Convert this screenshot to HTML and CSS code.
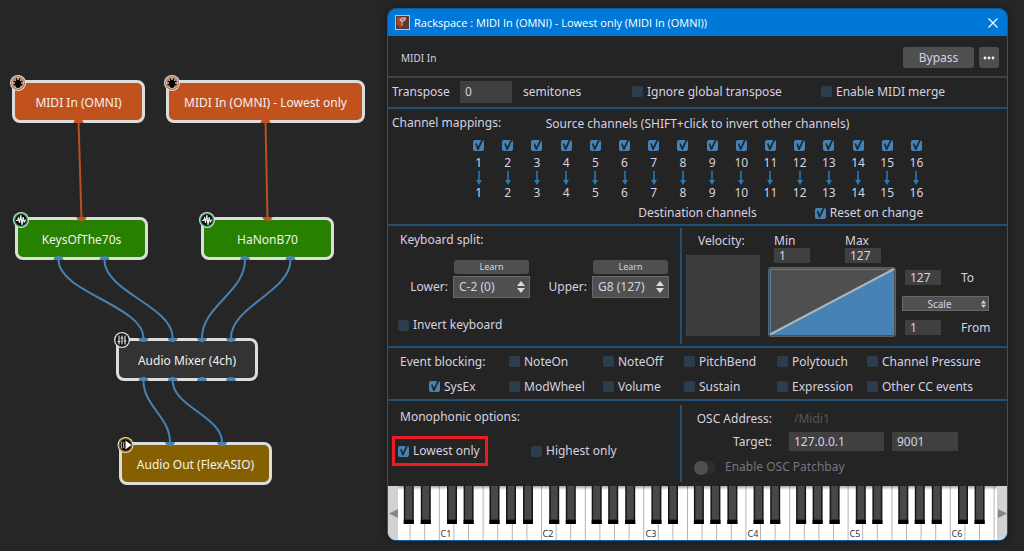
FILE: index.html
```html
<!DOCTYPE html>
<html lang="en">
<head>
<meta charset="utf-8">
<title>Rackspace</title>
<link rel="stylesheet" href="styles.css">
</head>
<body>
<section class="canvas" aria-label="Wiring view">
  <div class="node midi n1">MIDI In (OMNI)</div>
  <div class="node midi n2">MIDI In (OMNI) - Lowest only</div>
  <div class="node synth n3">KeysOfThe70s</div>
  <div class="node synth n4">HaNonB70</div>
  <div class="node mixer n5">Audio Mixer (4ch)</div>
  <div class="node output n6">Audio Out (FlexASIO)</div>
  <svg class="wires" width="387" height="551" viewBox="0 0 387 551" aria-hidden="true">
    <defs>
      <path id="out" d="M-5 0A5 4 0 0 1 5 0Z"/>
      <path id="in" d="M-5 0A5 4 0 0 0 5 0Z"/>
      <g id="midi-badge"><circle r="8" fill="#dcdcdc"/><circle r="7" fill="#c96a3e"/><circle r="5.800" fill="#e6d6cc"/><circle r="5" fill="#050505"/><g fill="#e6d6cc"><circle cx="-4" cy="0" r=".9"/><circle cx="4" cy="0" r=".9"/><circle cx="-2.800" cy="-2.900" r=".9"/><circle cx="2.800" cy="-2.900" r=".9"/><circle cx="0" cy="-4" r=".9"/><path d="M-4 2.500l1.500 0v2.500zM4 2.500l-1.500 0v2.500z"/></g></g>
      <g id="synth-badge"><circle r="8" fill="#dcdcdc"/><circle r="7" fill="#2f9a58"/><circle r="5.700" fill="#050505"/><path d="M-5 .5H-3.500L-2.500-2L-1.500 3L-.200-5L1 5L2.200-3L3.200 2L5-.5" stroke="#eee" stroke-width="1.200" fill="none"/></g>
    </defs>
    <g fill="none" stroke="#b9511f" stroke-width="2"><path d="M78.500 121L81.500 219M265.500 121L267.500 219"/></g>
    <g fill="none" stroke="#4682b4" stroke-width="2">
      <path d="M58.500 260C58.500 292 143.500 306 143.500 338"/>
      <path d="M104.500 260C104.500 292 172.700 306 172.700 338"/>
      <path d="M245 260C245 292 202 306 202 338"/>
      <path d="M290.500 260C290.500 292 231 306 231 338"/>
      <path d="M143.500 381C143.500 406 170 417 170 442"/>
      <path d="M172.700 381C172.700 406 222 417 222 442"/>
    </g>
    <g fill="#c4541f"><use href="#out" x="78.500" y="123"/><use href="#out" x="265.500" y="123"/><use href="#in" x="81.500" y="217"/><use href="#in" x="267.500" y="217"/></g>
    <g fill="#4682b4">
      <use href="#out" x="58.500" y="260"/><use href="#out" x="104.500" y="260"/><use href="#out" x="245" y="260"/><use href="#out" x="290.500" y="260"/>
      <use href="#in" x="143.500" y="338"/><use href="#in" x="172.700" y="338"/><use href="#in" x="202" y="338"/><use href="#in" x="231" y="338"/>
      <use href="#out" x="143.500" y="381"/><use href="#out" x="172.700" y="381"/><use href="#out" x="202" y="381"/><use href="#out" x="231" y="381"/>
      <use href="#in" x="170" y="442"/><use href="#in" x="222" y="442"/>
    </g>
    <use href="#midi-badge" x="18" y="83"/><use href="#midi-badge" x="172" y="83"/>
    <use href="#synth-badge" x="21" y="220"/><use href="#synth-badge" x="207" y="220"/>
    <g transform="translate(122 340)"><circle r="8" fill="#dcdcdc"/><circle r="6.700" fill="#111"/><path d="M-3-4.500v9M0-4.500v9M3-4.500v9M-4.500 1.500h3M-1.500-2h3M1.500 1h3" stroke="#ddd" stroke-width="1.200"/></g>
    <g transform="translate(125.500 445)"><circle r="8" fill="#dcdcdc"/><circle r="7" fill="#8a6200"/><circle r="5.700" fill="#050505"/><path d="M0-4.500L6 0L0 4.500z" fill="#fff"/><path d="M-3.500-3.500q-2 3.500 0 7M-1.500-3q-1 3 0 6" stroke="#ccc" fill="none"/></g>
  </svg>
</section>

<main class="window">
  <header class="titlebar">
    <svg class="app-icon" width="15" height="15" viewBox="0 0 15 15" aria-hidden="true"><path fill="#c9c4c0" d="M0 0h15v15H0z"/><path fill="#5b3a33" d="M1 1h13v13H1z"/><path fill="#b5402c" d="M2 2h9L6 7v6L2 9z"/><path d="M10.500 3Q5 2.500 5 5.500q3 2 4.500 0T10.500 3M7 7v4" fill="#d9694f" stroke="#ead9d2" stroke-width=".9"/></svg>
    <h1>Rackspace : MIDI In (OMNI) - Lowest only (MIDI In (OMNI))</h1>
    <button class="close" aria-label="Close"><svg width="10" height="10" viewBox="0 0 10 10"><path d="M.5.5l9 9M9.500.5l-9 9" stroke="#fff" stroke-width="1.100"/></svg></button>
  </header>

  <div class="plugin-bar">
    <span class="plugin-name">MIDI In</span>
    <button class="btn bypass">Bypass</button>
    <button class="btn more" aria-label="More"><svg width="12" height="4" viewBox="0 0 12 4"><g fill="#f2f2f6"><circle cx="2" cy="2" r="1.400"/><circle cx="6" cy="2" r="1.400"/><circle cx="10" cy="2" r="1.400"/></g></svg></button>
  </div>

  <div class="transpose">
    <label for="transpose">Transpose</label>
    <input class="field" id="transpose" value="0">
    <span>semitones</span>
    <label class="check"><input type="checkbox">Ignore global transpose</label>
    <label class="check"><input type="checkbox">Enable MIDI merge</label>
  </div>

  <section class="channels">
    <div class="triple head"><h2>Channel mappings:</h2><span class="source">Source channels (SHIFT+click to invert other channels)</span></div>
    <div class="channel-grid" id="channel-grid"></div>
    <div class="triple foot"><span class="dest">Destination channels</span><label class="check reset"><input type="checkbox" checked>Reset on change</label></div>
  </section>

  <section class="pair split-row">
    <div class="split">
      <h2>Keyboard split:</h2>
      <div class="ranges">
        <label for="lower">Lower:</label>
        <div class="range"><button class="btn learn">Learn</button><div class="select"><select id="lower"><option>C-2 (0)</option></select><svg width="8" height="12" viewBox="0 0 8 12"><path d="M0 5l4-5 4 5zM0 7l4 5 4-5z" fill="#dcd8ea"/></svg></div></div>
        <label for="upper">Upper:</label>
        <div class="range"><button class="btn learn">Learn</button><div class="select"><select id="upper"><option>G8 (127)</option></select><svg width="8" height="12" viewBox="0 0 8 12"><path d="M0 5l4-5 4 5zM0 7l4 5 4-5z" fill="#dcd8ea"/></svg></div></div>
      </div>
      <label class="check"><input type="checkbox">Invert keyboard</label>
    </div>
    <div class="velocity">
      <div class="vel-meter"><h2>Velocity:</h2><div class="meter"></div></div>
      <div class="vel-curve">
        <div class="limits">
          <div class="limit"><label for="vmin">Min</label><input class="field small" id="vmin" value="1"></div>
          <div class="limit"><label for="vmax">Max</label><input class="field small" id="vmax" value="127"></div>
        </div>
        <svg class="curve" viewBox="0 0 128 70" aria-hidden="true"><rect x=".5" y=".5" width="127" height="69" rx="2" fill="#4f4f4f" stroke="#62605e"/><path d="M2.500 67V2.500H125" fill="none" stroke="#4682b4"/><path d="M2 68L126 2V68Z" fill="#4682b4"/><path d="M2 67.500L126 2" stroke="#a9b4bd" stroke-width="2"/></svg>
      </div>
      <div class="vel-out">
        <div class="out-row"><input class="field small" id="vto" value="127"><label for="vto">To</label></div>
        <div class="select scale"><select aria-label="Curve mode"><option>Scale</option></select><svg width="5" height="8" viewBox="0 0 8 12"><path d="M0 5l4-5 4 5zM0 7l4 5 4-5z" fill="#dcd8ea"/></svg></div>
        <div class="out-row"><input class="field small" id="vfrom" value="1"><label for="vfrom">From</label></div>
      </div>
    </div>
  </section>

  <section class="events">
    <h2>Event blocking:</h2>
    <label class="check"><input type="checkbox">NoteOn</label>
    <label class="check"><input type="checkbox">NoteOff</label>
    <label class="check"><input type="checkbox">PitchBend</label>
    <label class="check"><input type="checkbox">Polytouch</label>
    <label class="check"><input type="checkbox">Channel Pressure</label>
    <label class="check sysex"><input type="checkbox" checked>SysEx</label>
    <label class="check"><input type="checkbox">ModWheel</label>
    <label class="check"><input type="checkbox">Volume</label>
    <label class="check"><input type="checkbox">Sustain</label>
    <label class="check"><input type="checkbox">Expression</label>
    <label class="check"><input type="checkbox">Other CC events</label>
  </section>

  <section class="pair mono-row">
    <div class="mono">
      <h2>Monophonic options:</h2>
      <div class="mono-checks">
        <label class="check marked"><input type="checkbox" checked>Lowest only</label>
        <label class="check"><input type="checkbox">Highest only</label>
      </div>
    </div>
    <div class="osc">
      <div class="osc-grid">
        <label for="osc">OSC Address:</label><input class="ghost" id="osc" placeholder="/Midi1">
        <label for="target">Target:</label>
        <div class="target"><input class="field host" id="target" value="127.0.0.1"><input class="field port" aria-label="Port" value="9001"></div>
      </div>
      <label class="toggle"><input type="checkbox" disabled>Enable OSC Patchbay</label>
    </div>
  </section>

  <div class="keyboard">
    <button class="scroll" aria-label="Scroll left"><svg width="9" height="9" viewBox="0 0 9 9"><path d="M9 0v9L0 4.500z" fill="#878787"/></svg></button>
    <svg class="keys" viewBox="0 0 599 54" role="img" aria-label="Piano keyboard">
      <defs>
        <linearGradient id="shade" x2="0" y2="1"><stop stop-color="#000" stop-opacity=".35"/><stop offset="1" stop-color="#000" stop-opacity="0"/></linearGradient>
        <g id="whites"><path d="M0 0V54M14.600 0V54M29.200 0V54M43.800 0V54M58.400 0V54M73 0V54M87.600 0V54" stroke="#b5b5b5"/></g>
        <g id="black"><path fill="#161616" d="M0 0h10v38H0z"/><path fill="#484848" d="M1.500 0h7v33.500h-7z"/><path fill="#000" d="M0 34h10v4H0z"/></g>
        <g id="blacks"><use href="#black" x="7.700"/><use href="#black" x="24.300"/><use href="#black" x="50.200"/><use href="#black" x="66.700"/><use href="#black" x="83.700"/></g>
      </defs>
      <path fill="#fff" d="M0 0h599v54H0z"/>
      <use href="#whites" x="-60.900"/><use href="#whites" x="41.300"/><use href="#whites" x="143.500"/><use href="#whites" x="245.700"/><use href="#whites" x="347.900"/><use href="#whites" x="450.100"/><use href="#whites" x="552.300"/>
      <path fill="url(#shade)" d="M0 0h599v4H0z"/>
      <use href="#blacks" x="-60.900"/><use href="#blacks" x="41.300"/><use href="#blacks" x="143.500"/><use href="#blacks" x="245.700"/><use href="#blacks" x="347.900"/><use href="#blacks" x="450.100"/><use href="#blacks" x="552.300"/>
      <g class="key-names"><text x="48" y="51">C1</text><text x="150" y="51">C2</text><text x="253" y="51">C3</text><text x="355" y="51">C4</text><text x="457" y="51">C5</text><text x="559" y="51">C6</text></g>
    </svg>
    <button class="scroll" aria-label="Scroll right"><svg width="9" height="9" viewBox="0 0 9 9"><path d="M0 0v9l9-4.500z" fill="#878787"/></svg></button>
  </div>
</main>
<script src="channels.js"></script>
</body>
</html>
```
FILE: styles.css
```css
* { box-sizing: border-box; }

body {
  margin: 0;
  padding-top: 8px;
  min-height: 100vh;
  background: #262626;
  color: #d6d2e0;
  font: 12px/14px "Noto Sans", Verdana, sans-serif;
}

button, input, select { font: inherit; color: inherit; margin: 0; padding: 0; border: 0; border-radius: 0; }
h1, h2 { margin: 0; font-size: inherit; font-weight: normal; white-space: nowrap; }
label, span { white-space: nowrap; }
svg { display: block; }

/* wiring canvas */
.canvas { position: absolute; top: 0; left: 0; }
.wires { position: absolute; top: 0; left: 0; }
.node {
  position: absolute;
  height: 43px;
  display: flex;
  align-items: center;
  justify-content: center;
  padding-top: 2px;
  border: 3px solid #dcdcdc;
  border-radius: 8px;
  color: #f2f0f0;
  white-space: nowrap;
}
.midi { background: #c1521e; }
.synth { background: #278000; }
.mixer { background: #333; }
.output { background: #866000; }
.n1 { left: 12px; top: 80px; width: 133px; }
.n2 { left: 166px; top: 80px; width: 199px; }
.n3 { left: 15px; top: 217px; width: 133px; }
.n4 { left: 201px; top: 217px; width: 133px; }
.n5 { left: 116px; top: 338px; width: 142px; }
.n6 { left: 119px; top: 442px; width: 153px; }

/* plugin window */
.window {
  margin: 0 16px 0 387px;
  border: 1px solid #0f5c9a;
  border-radius: 9px;
  overflow: hidden;
  background: #242424;
  box-shadow: 0 0 10px rgba(0, 0, 0, .4);
}
.titlebar {
  display: flex;
  align-items: center;
  gap: 4px;
  height: 27px;
  padding: 0 8px 0 7px;
  background: #0078d7;
  color: #fff;
}
.titlebar h1 { flex: 1; font: 11px/16px "Open Sans", "Segoe UI", sans-serif; }
.close { display: grid; place-items: center; width: 12px; height: 20px; background: none; }

.plugin-bar {
  display: flex;
  align-items: center;
  gap: 5px;
  height: 42px;
  padding: 3px 8px 0 13px;
  border-bottom: 2px solid #424242;
}
.plugin-name { flex: 1; font-size: 10px; }
.btn { background: #4f4f4f; border-radius: 3px; }
.bypass { width: 71px; height: 21px; }
.more { display: grid; place-items: center; width: 20px; height: 21px; }

.field { background: #404040; width: 36px; height: 15px; padding: 0 5px; }

.transpose {
  display: grid;
  grid-template-columns: 68fr 63fr 109fr 189fr 186fr;
  align-items: center;
  height: 31px;
  padding: 0 0 2px 4px;
  border-bottom: 2px solid #1f4f74;
}
.transpose .field { width: 52px; height: 22px; }

.check { display: flex; align-items: center; gap: 4px; }
.check input, .tick {
  appearance: none;
  position: relative;
  flex: none;
  width: 11px;
  height: 11px;
  border-radius: 2px;
  background: #2c3d4d;
}
.check input:checked, .tick:checked { background: #4682b4; }
.check input:checked::after, .tick:checked::after {
  content: "";
  position: absolute;
  inset: 0;
  background: #1d2a36;
  clip-path: polygon(18% 35%, 32% 30%, 45% 62%, 74% 0, 92% 0, 50% 90%, 38% 90%);
}

.channels { padding: 5px 0; height: 117px; border-bottom: 2px solid #1f4f74; }
.triple { display: grid; grid-template-columns: 1fr auto 1fr; align-items: center; padding-left: 4px; padding-right: 4px; }
.source { padding-top: 3px; }
.dest { grid-column: 2; }
.reset { margin-left: 58px; }
.channel-grid { display: grid; grid-template-columns: repeat(16, 1fr); padding: 9px 76px 6px; }
.channel { display: grid; justify-items: center; row-gap: 1px; }
.channel label { padding-top: 4px; }

.pair { display: grid; grid-template-columns: minmax(0, 292fr) minmax(0, 327fr); border-bottom: 2px solid #1f4f74; }
.pair > :last-child { border-left: 2px solid #1f4f74; }
.split-row { height: 122px; padding: 2px 0; }
.split { padding: 5px 10px 0 12px; }
.split .check { margin: 20px 0 0 -2px; }
.ranges { display: grid; grid-template-columns: 48px 77px 52px 77px; column-gap: 5px; margin-top: 13px; }
.ranges label { align-self: end; justify-self: end; padding-bottom: 4px; }
.range { display: grid; gap: 2px; }
.learn { width: 75px; height: 14px; margin-left: 1px; font-size: 9px; line-height: 14px; }
.select { position: relative; }
.select select { appearance: none; width: 100%; height: 22px; padding: 0 5px; background: #505050; border: 1px solid #686868; }
.select svg { position: absolute; right: 5px; top: 50%; transform: translateY(-50%); pointer-events: none; }

.velocity { display: flex; padding: 6px 18px 0 4px; }
.vel-meter h2 { padding-left: 12px; }
.meter { width: 74px; height: 81px; margin-top: 7px; background: #3c3c3c; border: 1px solid #33444f; }
.vel-curve { flex: 1; padding: 0 6px 0 8px; }
.limits { display: flex; gap: 35px; padding-left: 6px; }
.limit { display: grid; }
.curve { width: 100%; height: auto; margin-top: 4px; }
.vel-out { width: 87px; padding-top: 36px; }
.out-row { display: flex; align-items: center; gap: 20px; padding-left: 3px; }
.scale { margin: 11px 0 9px; }
.scale select { height: 15px; text-align: center; font-size: 10px; line-height: 12px; padding: 0 20px 0 8px; }
.scale svg { right: 3px; }

.events {
  display: grid;
  grid-template-columns: 109fr 94fr 81fr 93fr 90fr 140fr;
  align-items: center;
  height: 53px;
  padding: 1px 0 0 12px;
  border-bottom: 2px solid #1f4f74;
}
.sysex { margin-left: 29px; }

.mono-row { height: 85px; border-bottom: 0; padding: 4px 0; }
.mono { padding: 5px 0 0 12px; }
.mono-checks { display: flex; align-items: center; gap: 43px; margin: 12px 0 0 -8px; }
.marked { width: 96px; height: 30px; padding: 0 4px 0 3px; border: 3px solid #ec1c24; }
.osc { padding: 7px 0 0 12px; }
.osc-grid { display: grid; grid-template-columns: 82px 1fr; align-items: center; column-gap: 13px; row-gap: 6px; }
.osc-grid label { justify-self: end; padding-right: 4px; }
.ghost { background: none; height: 14px; padding: 0 5px; }
.ghost::placeholder { color: #565656; opacity: 1; }
.target { display: flex; gap: 8px; }
.target .field { height: 19px; }
.target .host { width: 95px; }
.target .port { width: 66px; }
.toggle { display: flex; align-items: center; gap: 9px; margin-top: 9px; color: #77757d; }
.toggle input { appearance: none; width: 22px; height: 13px; border-radius: 7px; background: #2d2d2d; }
.toggle input::before { content: ""; display: block; width: 14px; height: 14px; border-radius: 50%; background: #505050; }

.keyboard { display: flex; background: #d2d2d2; }
.keys { flex: 1; min-width: 0; height: auto; }
.scroll { display: grid; place-items: center; width: 10px; background: #d2d2d2; }
.key-names text { font: 9px "Noto Sans", sans-serif; fill: #333; text-anchor: middle; }
```
FILE: channels.js
```js
const grid = document.getElementById("channel-grid");
for (let n = 1; n <= 16; n++) {
  grid.insertAdjacentHTML("beforeend",
    `<div class="channel"><input class="tick" type="checkbox" id="ch${n}" checked>
     <label for="ch${n}">${n}</label>
     <svg width="6" height="14" viewBox="0 0 6 14"><path d="M2.200 0h1.600v9H6L3 14 0 9h2.200z" fill="#2a78b4"/></svg>
     <span>${n}</span></div>`);
}
```
